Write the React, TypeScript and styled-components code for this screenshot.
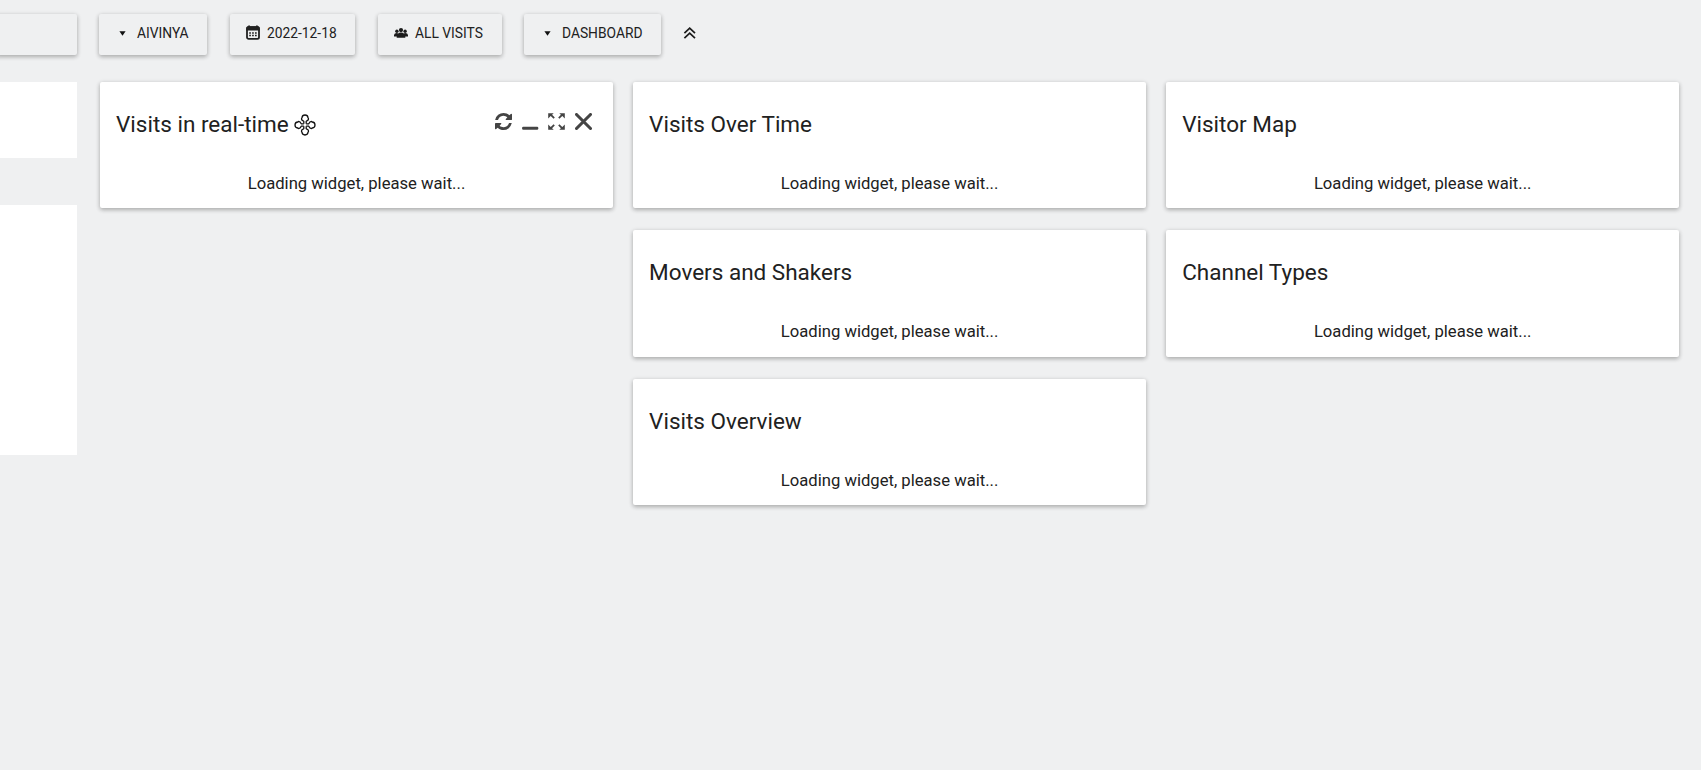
import React from "react";
import styled, { createGlobalStyle, css } from "styled-components";

const GlobalStyle = createGlobalStyle`
  * { box-sizing: border-box; }
  body {
    margin: 0;
    background: #eff0f1;
    color: #212121;
    font-family: Roboto, "Liberation Sans", sans-serif;
    overflow: hidden;
  }
`;

const raised = css`
  box-shadow: 0 2px 4px 0 rgba(0, 0, 0, 0.18), 0 1px 5px 0 rgba(0, 0, 0, 0.16);
  border-radius: 2px;
`;

const Page = styled.div`
  display: flex;
  height: 770px;
  padding-top: 14px;
`;

const Sidebar = styled.aside`
  width: 77px;
  flex: none;
`;

const SearchBox = styled.div`
  ${raised}
  height: 41px;
  margin: 0 0 27px -4px;
`;

const MenuPanel = styled.div<{ $height: number }>`
  height: ${(p) => p.$height}px;
  margin-bottom: 47px;
  background: #fff;
`;

const Main = styled.main`
  flex: 1;
  padding: 0 22px;
`;

const Toolbar = styled.nav`
  display: flex;
  height: 41px;
  margin-bottom: 27px;
`;

const Selector = styled.button<{ $width: number; $after: number; $indent: number }>`
  ${raised}
  display: flex;
  align-items: center;
  width: ${(p) => p.$width}px;
  height: 41px;
  margin: 0 ${(p) => p.$after}px 0 0;
  padding: 0 0 4px ${(p) => p.$indent}px;
  border: 0;
  background: #eff0f1;
  color: #212121;
  font: 13.8px/20px Roboto, "Liberation Sans", sans-serif;
  text-transform: uppercase;
  white-space: nowrap;
`;

const IconSlot = styled.span<{ $width: number }>`
  display: flex;
  flex: none;
  align-items: center;
  width: ${(p) => p.$width}px;
`;

const CaretSlot = styled(IconSlot)`
  padding-top: 1px;
`;

const Collapse = styled.span`
  display: flex;
  padding-top: 12px;
`;

const Columns = styled.div`
  display: grid;
  grid-template-columns: repeat(3, 513px);
  gap: 20.1px;
  margin-left: 1px;
`;

const Column = styled.div`
  display: flex;
  flex-direction: column;
  gap: 22px;
`;

const Card = styled.section`
  ${raised}
  height: 126.4px;
  padding: 27px 16px 0;
  background: #fff;
`;

const CardHead = styled.header`
  display: flex;
  height: 30px;
`;

const Title = styled.h2`
  margin: 0;
  font-size: 22.5px;
  line-height: 30px;
  font-weight: 400;
  white-space: nowrap;
`;

const MoveCursor = styled.span`
  display: flex;
  padding: 5px 0 0 5px;
`;

const Actions = styled.div`
  display: flex;
  gap: 9.6px;
  margin-left: auto;
  padding: 4.3px 5.2px 0 0;
  color: #444;
`;

const Loading = styled.p`
  margin: 33px 0 0;
  font-size: 16.65px;
  line-height: 24px;
  text-align: center;
`;

const Caret = () => (
  <svg width="7" height="5" viewBox="0 0 7 5">
    <path d="M.4 .3h6.2L3.5 4.8z" fill="#111" />
  </svg>
);

const Calendar = () => (
  <svg width="14" height="15" viewBox="0 0 14 15">
    <rect x="1" y="2.2" width="12" height="11.6" rx="1.6" fill="none" stroke="#212121" strokeWidth="1.8" />
    <path d="M.3 2.7Q.8 1.3 2.2 1.3V.5h1.8v.8h6V.5h1.8v.8q1.4 0 1.9 1.4V5.4H.3z" fill="#212121" />
    <path d="M3.2 7.2h1.7v1.5H3.2zM6.1 7.2h1.7v1.5H6.1zM9 7.2h1.7v1.5H9zM3.2 9.8h1.7v1.5H3.2zM6.1 9.8h1.7v1.5H6.1zM9 9.8h1.7v1.5H9z" fill="#212121" />
  </svg>
);

const People = () => (
  <svg width="14" height="10" viewBox="0 0 14 10" fill="#1b1b1b">
    <circle cx="2.9" cy="3.2" r="1.7" />
    <circle cx="11.1" cy="3.2" r="1.7" />
    <circle cx="7" cy="2.1" r="2.1" />
    <path d="M0 8.6V7Q.3 5.1 2.9 5.1L4.2 5.4Q5 4.4 7 4.4T9.8 5.4L11.1 5.1Q13.7 5.1 14 7v1.6h-2.7V9.8H2.7V8.6z" />
  </svg>
);

const DoubleChevron = () => (
  <svg width="13" height="14" viewBox="0 0 13 14" fill="none" stroke="#1b1b1b" strokeWidth="1.7">
    <path d="M1.4 7.2 6.7 2.2l5.3 5M1.4 12.2l5.3-5 5.3 5" />
  </svg>
);

const MoveGlyph = () => (
  <svg width="22" height="22" viewBox="0 0 22 22" fill="none" stroke="#111" strokeWidth="1.3" strokeLinejoin="round">
    {[0, 90, 180, 270].map((angle) => (
      <path
        key={angle}
        d="M9.8 9.8V7.2L8.7 6.6C7.2 6 7.3 4.300 8 3.700C8.200 1.800 9.300 1 11 1S13.800 1.800 14 3.700C14.700 4.300 14.800 6 13.300 6.600L12.200 7.200V9.800"
        transform={`rotate(${angle} 11 11)`}
      />
    ))}
  </svg>
);

const Refresh = () => (
  <svg width="17" height="17" viewBox="0 0 1536 1536" fill="currentColor">
    <path d="M1511 928q0 5-1 7-64 268-268 434.500T764 1536q-146 0-282.500-55T238 1324l-129 129q-19 19-45 19t-45-19-19-45V960q0-26 19-45t45-19h448q26 0 45 19t19 45-19 45l-137 137q71 66 161 102t187 36q134 0 250-65t186-179q11-17 53-117 8-23 30-23h192q13 0 22.500 9.500t9.500 22.500zm25-800v448q0 26-19 45t-45 19h-448q-26 0-45-19t-19-45 19-45l138-138Q969 256 768 256q-134 0-250 65T332 500q-11 17-53 117-8 23-30 23H50q-13 0-22.500-9.500T18 608v-7q65-268 270-434.500T768 0q146 0 284 55.500T1297 212l130-129q19-19 45-19t45 19 19 45z" />
  </svg>
);

const Minimise = () => (
  <svg width="17" height="17" viewBox="0 0 17 17">
    <rect x="0.1" y="13.8" width="16.2" height="3" rx="1.2" fill="currentColor" />
  </svg>
);

const Expand = () => (
  <svg width="17" height="17" viewBox="0 0 17 17" fill="currentColor">
    <path id="corner" d="M.2 .2h5.5L4.1 1.8l2.7 2.8-1.2 1.2-2.9-2.7L.2 5.5z" />
    <use href="#corner" transform="matrix(-1 0 0 1 17 0)" />
    <use href="#corner" transform="matrix(1 0 0 -1 0 17)" />
    <use href="#corner" transform="matrix(-1 0 0 -1 17 17)" />
  </svg>
);

const Close = () => (
  <svg width="17" height="17" viewBox="0 0 17 17">
    <path d="M1.5 1.5l14 14M15.5 1.5l-14 14" stroke="currentColor" strokeWidth="3.1" strokeLinecap="round" />
  </svg>
);

const Widget = ({ title, active = false }: { title: string; active?: boolean }) => (
  <Card>
    <CardHead>
      <Title>{title}</Title>
      {active && (
        <>
          <MoveCursor>
            <MoveGlyph />
          </MoveCursor>
          <Actions>
            <Refresh />
            <Minimise />
            <Expand />
            <Close />
          </Actions>
        </>
      )}
    </CardHead>
    <Loading>Loading widget, please wait...</Loading>
  </Card>
);

export default function App() {
  return (
    <Page>
      <GlobalStyle />
      <Sidebar>
        <SearchBox />
        <MenuPanel $height={76} />
        <MenuPanel $height={250} />
      </Sidebar>
      <Main>
        <Toolbar>
          <Selector $width={108} $after={23} $indent={20}>
            <CaretSlot $width={18}><Caret /></CaretSlot>
            Aivinya
          </Selector>
          <Selector $width={125} $after={23} $indent={16}>
            <IconSlot $width={21}><Calendar /></IconSlot>
            2022-12-18
          </Selector>
          <Selector $width={124} $after={22} $indent={16}>
            <IconSlot $width={21}><People /></IconSlot>
            All Visits
          </Selector>
          <Selector $width={137} $after={22} $indent={20}>
            <CaretSlot $width={18}><Caret /></CaretSlot>
            Dashboard
          </Selector>
          <Collapse>
            <DoubleChevron />
          </Collapse>
        </Toolbar>
        <Columns>
          <Column>
            <Widget title="Visits in real-time" active />
          </Column>
          <Column>
            <Widget title="Visits Over Time" />
            <Widget title="Movers and Shakers" />
            <Widget title="Visits Overview" />
          </Column>
          <Column>
            <Widget title="Visitor Map" />
            <Widget title="Channel Types" />
          </Column>
        </Columns>
      </Main>
    </Page>
  );
}
